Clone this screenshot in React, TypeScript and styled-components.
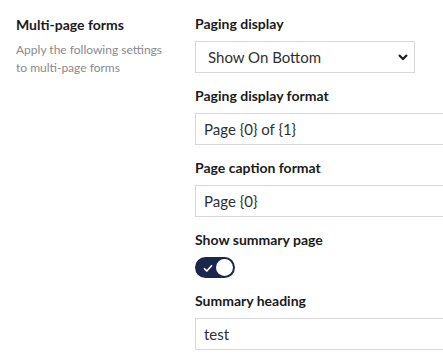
import styled, { createGlobalStyle } from 'styled-components';

const GlobalStyle = createGlobalStyle`
    body {
        margin: 0;
        font-family: Lato, "Open Sans", sans-serif;
        background: #ffffff;
        color: #1b1b1d;
        overflow: hidden;
    }
`;

const Wrapper = styled.div`
    display: grid;
    grid-template-columns: 179px 1fr;
    box-sizing: border-box;
    width: 443px;
    padding: 14px 0 0 16px;
    overflow: hidden;
`;

const Intro = styled.div`
    display: flex;
    flex-direction: column;
`;

const Heading = styled.div`
    font-size: 14px;
    font-weight: 700;
    line-height: 20px;
    margin-top: 1px;
`;

const Description = styled.p`
    margin: 6px 0 0;
    font-size: 12px;
    line-height: 18px;
    color: #8a898d;
`;

const Fields = styled.div`
    display: flex;
    flex-direction: column;
    gap: 13px;
    min-width: 0;
`;

const Field = styled.div`
    display: flex;
    flex-direction: column;
    gap: 7px;
`;

const Label = styled.label`
    font-size: 14px;
    font-weight: 700;
    line-height: 20px;
    color: #1b1b1d;
`;

const SelectBox = styled.div`
    display: flex;
    align-items: center;
    justify-content: space-between;
    box-sizing: border-box;
    width: 220px;
    height: 32px;
    padding: 0 5px 0 12px;
    border: 1px solid #d8d7d9;
    font-size: 15px;
    color: #303033;
`;

const Input = styled.input`
    box-sizing: border-box;
    width: 300px;
    height: 32px;
    padding: 0 8px;
    border: 1px solid #d8d7d9;
    font-family: inherit;
    font-size: 15px;
    color: #303033;
    outline: none;
`;

const Toggle = styled.div<{ $on: boolean }>`
    display: flex;
    align-items: center;
    justify-content: space-between;
    box-sizing: border-box;
    width: 40px;
    height: 21px;
    padding: 0 2px 0 8px;
    border-radius: 11px;
    background: ${p => (p.$on ? '#1b264f' : '#d8d7d9')};
`;

const Knob = styled.span`
    width: 17px;
    height: 17px;
    border-radius: 50%;
    background: #ffffff;
`;

const App = () => {
    return (
        <Wrapper>
            <GlobalStyle />
            <Intro>
                <Heading>Multi-page forms</Heading>
                <Description>
                    Apply the following settings
                    <br />
                    to multi-page forms
                </Description>
            </Intro>
            <Fields>
                <Field>
                    <Label>Paging display</Label>
                    <SelectBox>
                        <span>Show On Bottom</span>
                        <svg width="12" height="8" viewBox="0 0 12 8">
                            <path d="M2 2 L6 6 L10 2" fill="none" stroke="#1b1b1d" strokeWidth="2.2" />
                        </svg>
                    </SelectBox>
                </Field>
                <Field>
                    <Label>Paging display format</Label>
                    <Input defaultValue="Page {0} of {1}" />
                </Field>
                <Field>
                    <Label>Page caption format</Label>
                    <Input defaultValue="Page {0}" />
                </Field>
                <Field>
                    <Label>Show summary page</Label>
                    <Toggle $on={true}>
                        <svg width="10" height="8" viewBox="0 0 10 8">
                            <path d="M1 4.2 L3.8 7 L9 1.2" fill="none" stroke="#ffffff" strokeWidth="1.6" />
                        </svg>
                        <Knob />
                    </Toggle>
                </Field>
                <Field>
                    <Label>Summary heading</Label>
                    <Input defaultValue="test" />
                </Field>
            </Fields>
        </Wrapper>
    );
};

export default App;
